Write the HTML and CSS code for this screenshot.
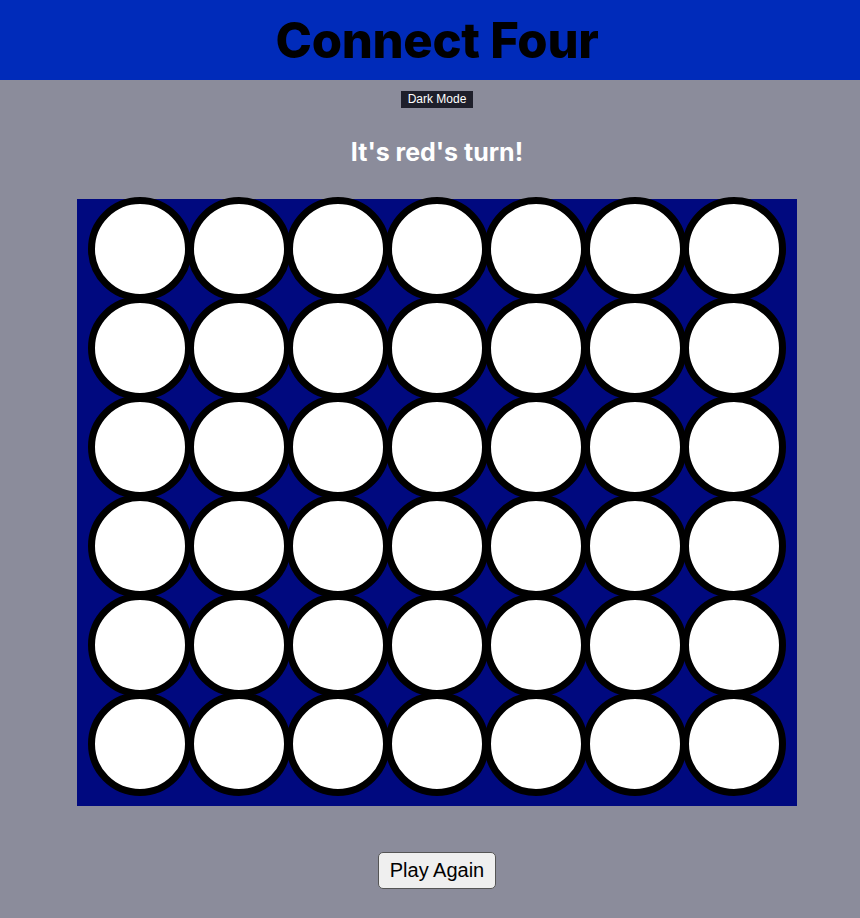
FILE: index.html
```html
<!DOCTYPE html>
<html lang="en">
<head>
<meta charset="utf-8">
<title>Connect Four</title>
<link rel="stylesheet" href="styles.css">
</head>
<body>
<header class="header">
  <h1 class="title">Connect Four</h1>
</header>
<main class="main">
  <div class="toolbar">
    <button class="mode-btn">Dark Mode</button>
  </div>
  <h2 class="turn">It's red's turn!</h2>
  <div class="board">
    <div class="cell"></div><div class="cell"></div><div class="cell"></div><div class="cell"></div><div class="cell"></div><div class="cell"></div><div class="cell"></div>
    <div class="cell"></div><div class="cell"></div><div class="cell"></div><div class="cell"></div><div class="cell"></div><div class="cell"></div><div class="cell"></div>
    <div class="cell"></div><div class="cell"></div><div class="cell"></div><div class="cell"></div><div class="cell"></div><div class="cell"></div><div class="cell"></div>
    <div class="cell"></div><div class="cell"></div><div class="cell"></div><div class="cell"></div><div class="cell"></div><div class="cell"></div><div class="cell"></div>
    <div class="cell"></div><div class="cell"></div><div class="cell"></div><div class="cell"></div><div class="cell"></div><div class="cell"></div><div class="cell"></div>
    <div class="cell"></div><div class="cell"></div><div class="cell"></div><div class="cell"></div><div class="cell"></div><div class="cell"></div><div class="cell"></div>
  </div>
  <div class="actions">
    <button class="again-btn">Play Again</button>
  </div>
</main>
</body>
</html>
```

FILE: styles.css
```css
body {
  margin: 0;
  background: #8b8c9b;
  font-family: Inter, "Liberation Sans", sans-serif;
}

.header {
  height: 80px;
  box-sizing: border-box;
  padding-left: 14px;
  background: #002bba;
  display: flex;
  align-items: center;
  justify-content: center;
}

.title {
  margin: 0;
  font-size: 49px;
  font-weight: 800;
  letter-spacing: -0.3px;
  color: #000;
}

.main {
  padding-left: 14px;
  display: flex;
  flex-direction: column;
  align-items: center;
}

.toolbar {
  margin-top: 11px;
  display: flex;
  justify-content: center;
}

.mode-btn {
  height: 17px;
  padding: 0 7px;
  border: none;
  background: #1e1f2b;
  color: #fff;
  font-family: "Liberation Sans", Arial, sans-serif;
  font-size: 12px;
  line-height: 17px;
}

.turn {
  margin: 29px 0 0;
  text-align: center;
  color: #fff;
  font-size: 25px;
  line-height: 30px;
  font-weight: 700;
}

.board {
  width: 720px;
  height: 607px;
  box-sizing: border-box;
  margin-top: 32px;
  padding: 0 14px 13px 13px;
  background: #00097f;
  display: grid;
  grid-template-columns: repeat(7, 99px);
  grid-template-rows: repeat(6, 99px);
}

.cell {
  width: 90px;
  height: 90px;
  margin: -2.5px;
  border: 7px solid #000;
  border-radius: 50%;
  background: #fff;
}

.actions {
  margin-top: 46px;
  display: flex;
  justify-content: center;
}

.again-btn {
  height: 37px;
  padding: 0 11px;
  border: 1px solid #555;
  border-radius: 5px;
  background: #efefef;
  color: #000;
  font-family: "Liberation Sans", Arial, sans-serif;
  font-size: 20px;
}
```
